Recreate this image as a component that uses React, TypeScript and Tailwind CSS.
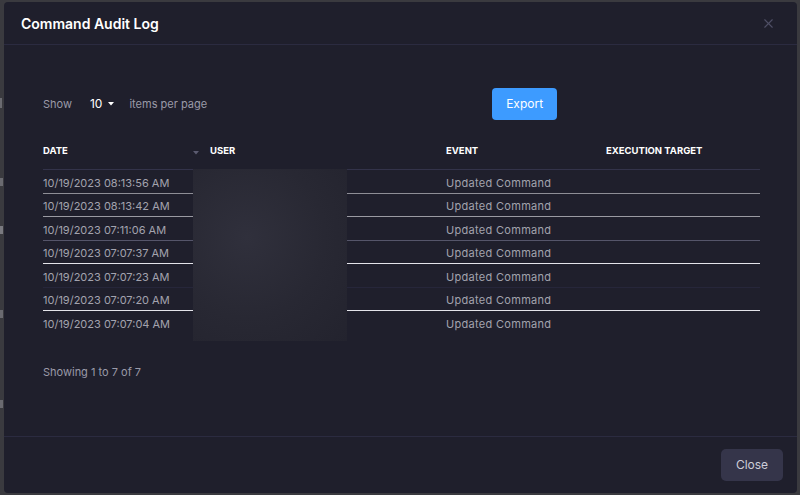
import { X } from 'lucide-react';

const rows = [
  { date: '10/19/2023 08:13:56 AM', line: 'border-[#8e8e96]' },
  { date: '10/19/2023 08:13:42 AM', line: 'border-[#9a9aa2]' },
  { date: '10/19/2023 07:11:06 AM', line: 'border-[#55556a]' },
  { date: '10/19/2023 07:07:37 AM', line: 'border-[#e4e4ea]' },
  { date: '10/19/2023 07:07:23 AM', line: 'border-[#26263a]' },
  { date: '10/19/2023 07:07:20 AM', line: 'border-[#e4e4ea]' },
  { date: '10/19/2023 07:07:04 AM', line: 'border-transparent' },
];

// колонки таблицы: DATE / USER / EVENT / EXECUTION TARGET
const cols = 'grid grid-cols-[167px_236px_160px_1fr]';

export default function App() {
  return (
    <div
      className="relative flex h-[495px] w-[800px] overflow-hidden bg-[#3a3a3f] pb-[2px] pl-[4px] pr-[3px] pt-[2px]"
      style={{ fontFamily: 'Inter, "Noto Sans", sans-serif' }}
    >
      {/* фон страницы под модалкой */}
      <div className="absolute left-0 top-[98px] h-[10px] w-[2px] bg-[#6a6a70]" />
      <div className="absolute left-0 top-[178px] h-[8px] w-[3px] bg-[#6a6a70]" />
      <div className="absolute left-0 top-[226px] h-[8px] w-[3px] bg-[#7a7a80]" />
      <div className="absolute left-0 top-[310px] h-[8px] w-[3px] bg-[#6a6a70]" />
      <div className="absolute left-0 top-[400px] h-[8px] w-[3px] bg-[#6a6a70]" />

      <div className="flex flex-1 flex-col rounded-sm bg-[#1f1f2c]">
        {/* header */}
        <div className="flex h-[43px] items-center justify-between border-b border-[#2b2b40] pl-[17px] pr-[21px]">
          <h1 className="pt-[1px] text-[14px] font-semibold text-white">Command Audit Log</h1>
          <X size={15} strokeWidth={1.8} className="text-[#4f4f66]" />
        </div>

        {/* body */}
        <div className="flex-1 pl-[39px] pr-[37px]">
          <div className="mt-[43px] flex h-[32px] items-center text-[11px] text-[#9a9aa8]">
            <span>Show</span>
            <span className="ml-[18px] flex items-center text-[12px] text-white">
              10
              <svg width="6" height="4" viewBox="0 0 6 4" className="ml-[6px]">
                <path d="M0 0h6L3 3.5z" fill="#ffffff" />
              </svg>
            </span>
            <span className="ml-[15px]">items per page</span>
            <button className="ml-[285px] h-[32px] w-[65px] rounded-[4px] bg-[#3d9bff] text-[12px] text-white">
              Export
            </button>
          </div>

          <div className="relative mt-[12px]">
            <div className={`${cols} h-[38px] items-center border-b border-[#33334a] pt-[2px] text-[9.5px] font-bold uppercase text-white`}>
              <div className="flex items-center justify-between pr-[11px]">
                <span>Date</span>
                <svg width="6" height="4" viewBox="0 0 6 4" className="mt-[2px]">
                  <path d="M0 0h6L3 3.5z" fill="#5b5b70" />
                </svg>
              </div>
              <div>User</div>
              <div>Event</div>
              <div>Execution Target</div>
            </div>

            {rows.map((r) => (
              <div
                key={r.date}
                className={`${cols} h-[23.5px] items-center border-b pt-[3px] text-[11px] text-[#a3a3ae] ${r.line}`}
              >
                <div>{r.date}</div>
                <div />
                <div className="tracking-[0.3px]">Updated Command</div>
                <div />
              </div>
            ))}

            {/* размытый блок с пользователями */}
            <div className="absolute left-[150px] top-[37px] h-[172px] w-[154px] bg-[radial-gradient(ellipse_at_35%_40%,#30303c,#282833_55%,#23232e)]" />
          </div>

          <p className="mt-[29px] text-[11px] text-[#9a9aa8]">Showing 1 to 7 of 7</p>
        </div>

        {/* footer */}
        <div className="flex h-[57px] items-center justify-end border-t border-[#2b2b40] pr-[14px]">
          <button className="h-[32px] w-[62px] rounded-[5px] bg-[#35354a] text-[12px] text-[#cdcdd8]">
            Close
          </button>
        </div>
      </div>
    </div>
  );
}
